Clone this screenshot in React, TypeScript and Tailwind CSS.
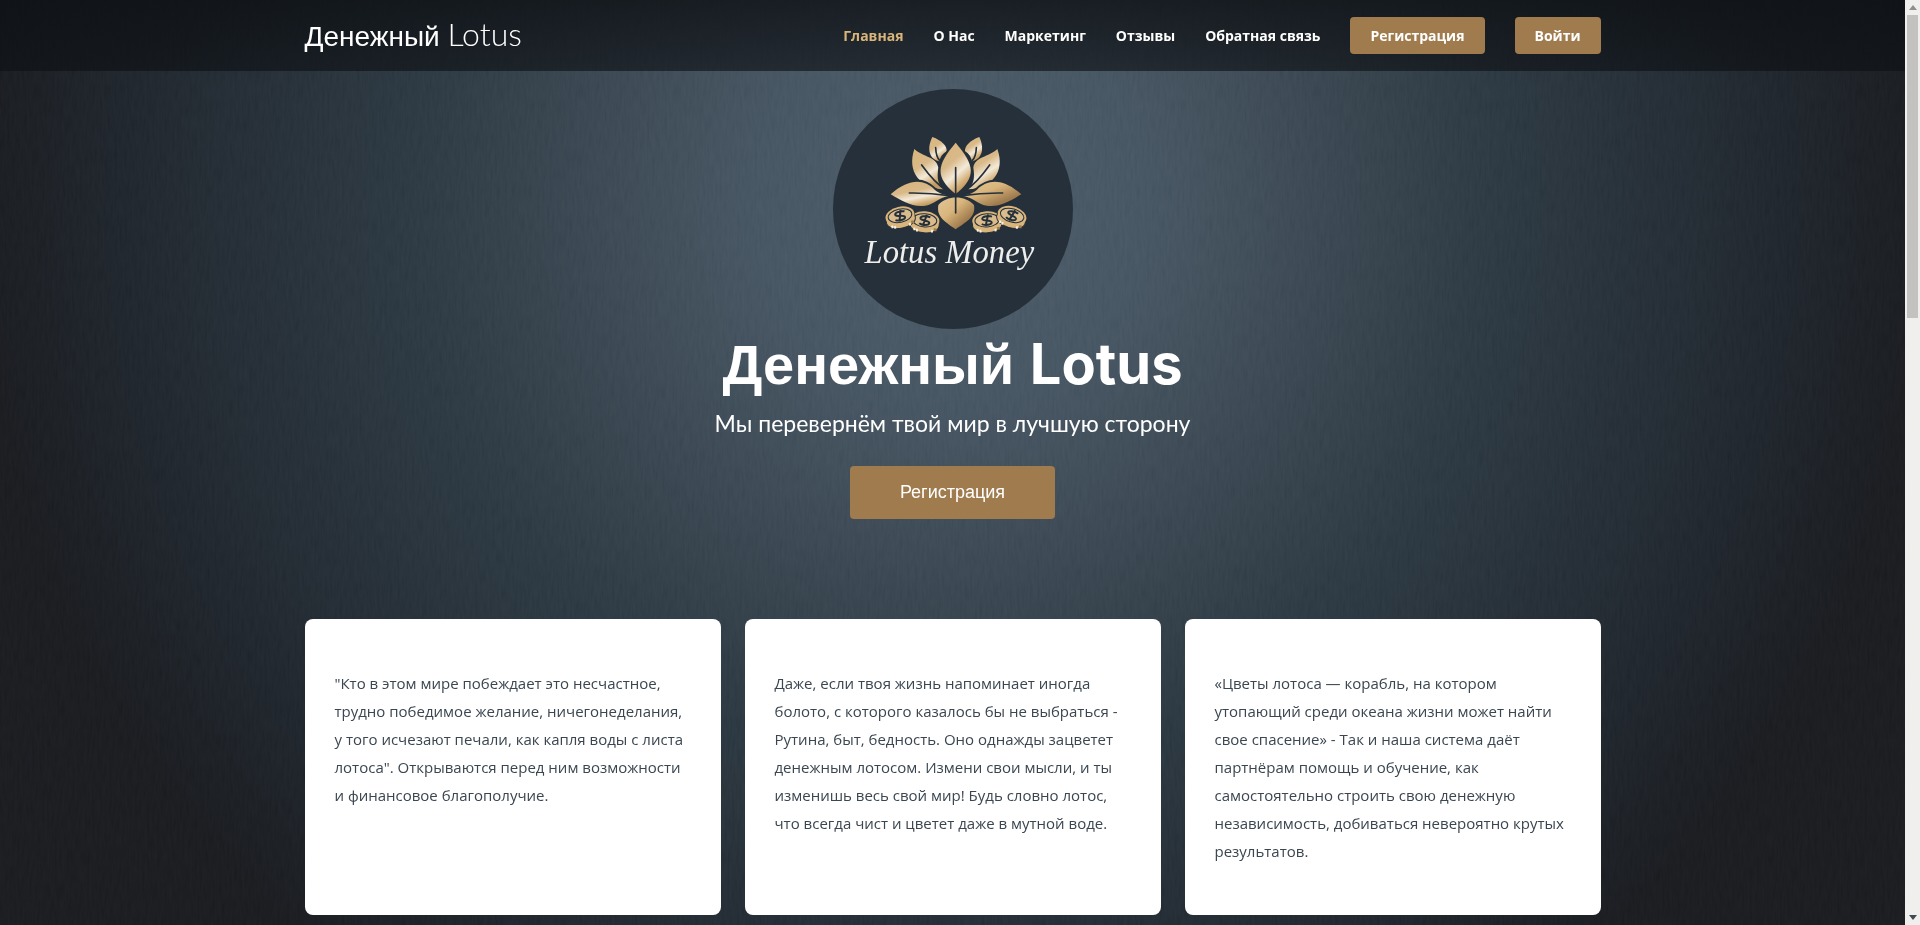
import React from "react";

const navLinks = ["Главная", "О Нас", "Маркетинг", "Отзывы", "Обратная связь"];

const quotes = [
  "\"Кто в этом мире побеждает это несчастное, трудно победимое желание, ничегонеделания, у того исчезают печали, как капля воды с листа лотоса\". Открываются перед ним возможности и финансовое благополучие.",
  "Даже, если твоя жизнь напоминает иногда болото, с которого казалось бы не выбраться - Рутина, быт, бедность. Оно однажды зацветет денежным лотосом. Измени свои мысли, и ты изменишь весь свой мир! Будь словно лотос, что всегда чист и цветет даже в мутной воде.",
  "«Цветы лотоса — корабль, на котором утопающий среди океана жизни может найти свое спасение» - Так и наша система даёт партнёрам помощь и обучение, как самостоятельно строить свою денежную независимость, добиваться невероятно крутых результатов.",
];

function Coin({ x, y, tilt }: { x: number; y: number; tilt: number }) {
  return (
    <g transform={`translate(${x} ${y}) rotate(${tilt})`}>
      <path d="M-44-5V10C-40 40 40 40 44 10V-5Z" fill="#d9b57c" stroke="#26303a" strokeWidth="3" />
      <path d="M-30 19l1 8M-22 22l1 8M24 22v8" stroke="#f6efe3" strokeWidth="6" />
      <path d="M33 17v8" stroke="#a07b4e" strokeWidth="8" />
      <ellipse cy="-5" rx="44" ry="27" fill="#d9b57c" />
      <ellipse cy="-5" rx="36" ry="20" fill="#d9bb8c" stroke="#26303a" strokeWidth="3" />
      <path d="M16-15C4-20-17-17-13-9-9-3 13-6 14 2 14 10-8 11-16 5M5-22-5 12" fill="none" stroke="#26303a" strokeWidth="6" />
    </g>
  );
}

function Emblem() {
  return (
    <svg className="size-60" viewBox="39 26 720 720" role="img" aria-label="Lotus Money">
      <defs>
        <linearGradient id="gold" x1="0" y1="0" x2="0.5" y2="1">
          <stop offset="0" stopColor="#d9b57c" />
          <stop offset="0.45" stopColor="#d9b988" />
          <stop offset="0.7" stopColor="#f3ead9" />
          <stop offset="0.9" stopColor="#d5b17a" />
          <stop offset="1" stopColor="#c09a63" />
        </linearGradient>
        <linearGradient id="bronze" x1="0" y1="0" x2="1" y2="1">
          <stop offset="0" stopColor="#e2c698" />
          <stop offset="0.4" stopColor="#d9b57c" />
          <stop offset="0.75" stopColor="#a07b4e" />
          <stop offset="1" stopColor="#a07b4e" />
        </linearGradient>
      </defs>
      <circle cx="399" cy="386" r="360" fill="#26303a" />
      <g fill="url(#gold)">
        <path d="M337 170C365 180 382 197 380 213 367 220 361 231 358 243 325 235 321 202 337 170Z" />
        <path d="M478 170C450 180 434 197 435 213 448 220 453 231 456 243 489 235 493 202 478 170Z" />
        <path d="M283 206C309 231 350 228 355 262 350 292 354 312 370 327 300 324 260 274 283 206Z" />
        <path d="M532 206C506 231 465 228 460 262 465 292 461 312 445 327 515 324 557 274 532 206Z" />
        <path d="M407 187C465 255 470 290 407 341 344 290 349 255 407 187Z" stroke="#26303a" strokeWidth="12" paintOrder="stroke" />
        <path d="M212 342C268 293 312 296 344 328 359 340 373 344 390 346 351 353 345 371 316 376 278 382 246 362 212 342Z" stroke="#26303a" strokeWidth="12" paintOrder="stroke" />
      </g>
      <g fill="url(#bronze)" stroke="#26303a" strokeWidth="12" paintOrder="stroke">
        <path d="M604 342C548 293 504 296 471 328 456 340 443 344 426 346 465 353 471 371 500 376 538 382 570 362 604 342Z" />
        <path d="M407 447C374 423 349 410 355 374 380 344 436 344 462 374 468 410 441 423 407 447Z" />
      </g>
      <g fill="none" stroke="#26303a" strokeWidth="5" strokeLinecap="round">
        <path d="M407 262V398M347 202Q348 229 359 240M469 202Q468 229 457 240M305 254Q345 309 378 329M509 254Q470 309 437 329M268 338Q330 337 388 346M548 338Q485 337 427 346" />
      </g>
      <Coin x={314} y={425} tilt={4} />
      <Coin x={241} y={411} tilt={-12} />
      <Coin x={501} y={425} tilt={-4} />
      <Coin x={575} y={410} tilt={16} />
      <text x="388" y="549" textAnchor="middle" fill="#eeeeec" fontSize="98" fontStyle="italic" fontFamily="'Liberation Serif', serif">
        Lotus Money
      </text>
    </svg>
  );
}

function ScrollBar() {
  return (
    <div aria-hidden="true" className="flex w-[15px] shrink-0 flex-col items-center justify-between bg-[#f1efed] py-[5px]">
      <div className="flex w-full flex-1 flex-col items-center gap-[5px]">
        <svg className="h-[5px] w-2" viewBox="0 0 8 5">
          <path d="M4 0 8 5H0Z" fill="#8f8f8f" />
        </svg>
        <div className="h-1/3 w-[11px] bg-[#c3c2c0]" />
      </div>
      <svg className="h-[5px] w-2" viewBox="0 0 8 5">
        <path d="M0 0H8L4 5Z" fill="#3f4a54" />
      </svg>
    </div>
  );
}

export default function App() {
  return (
    <div className="flex h-screen overflow-hidden bg-[#1a1d22] font-['Open_Sans',sans-serif]">
      <div className="relative isolate flex min-w-0 flex-1 flex-col bg-[radial-gradient(ellipse_51%_106%_at_50%_22%,#4d5b68_0%,#465562_20%,#3b4853_37%,#2d3a43_54%,#252e37_72%,#1f252c_86%,#1a1c20_100%)]">
        <svg aria-hidden="true" className="absolute inset-0 -z-10 size-full opacity-10 mix-blend-soft-light">
          <filter id="weave">
            <feTurbulence type="fractalNoise" baseFrequency="0.4 0.06" numOctaves="2" seed="4" />
            <feColorMatrix values="1 0 0 0 0  1 0 0 0 0  1 0 0 0 0  0 0 0 0 1" />
          </filter>
          <rect width="100%" height="100%" filter="url(#weave)" />
        </svg>
        <header className="bg-[linear-gradient(#0d1014cc,#0d1014a0)]">
          <div className="mx-auto flex h-[71px] max-w-[1296px] items-center justify-between">
            <a href="#" className="font-['Liberation_Sans',sans-serif] text-[28px] leading-9 text-white">
              Денежный <span className="font-['Lato',sans-serif] text-[32px] font-light">Lotus</span>
            </a>
            <nav className="flex items-center gap-[30px] text-sm font-bold text-white">
              {navLinks.map((label, i) => (
                <a key={label} href="#" className={i === 0 ? "text-[#d9b57c]" : "text-white"}>
                  {label}
                </a>
              ))}
              <a href="#" className="rounded bg-[#a07b4e] px-5 py-2 leading-[21px]">Регистрация</a>
              <a href="#" className="rounded bg-[#a07b4e] px-5 py-2 leading-[21px]">Войти</a>
            </nav>
          </div>
        </header>
        <main className="flex flex-col pt-[18px]">
          <section className="flex flex-col items-center text-white">
            <Emblem />
            <h1 className="font-['Liberation_Sans',sans-serif] text-[56px] leading-[70px] font-bold">
              Денежный <span className="font-['Inter',sans-serif]">Lotus</span>
            </h1>
            <p className="mt-2 font-['Lato',sans-serif] text-[23px] leading-[30px]">
              Мы перевернём твой мир в лучшую сторону
            </p>
            <button type="button" className="mt-7 rounded bg-[#a07b4e] px-[50px] py-[14px] font-['Liberation_Sans',sans-serif] text-lg leading-[25px]">
              Регистрация
            </button>
          </section>
          <section className="mx-auto mt-[100px] grid w-full max-w-[1296px] grid-cols-3 gap-6">
            {quotes.map((quote) => (
              <article key={quote} className="rounded-lg bg-white px-[30px] py-[50px] text-[15px] leading-7 text-[#3b4650]">
                <p>{quote}</p>
              </article>
            ))}
          </section>
        </main>
      </div>
      <ScrollBar />
    </div>
  );
}
